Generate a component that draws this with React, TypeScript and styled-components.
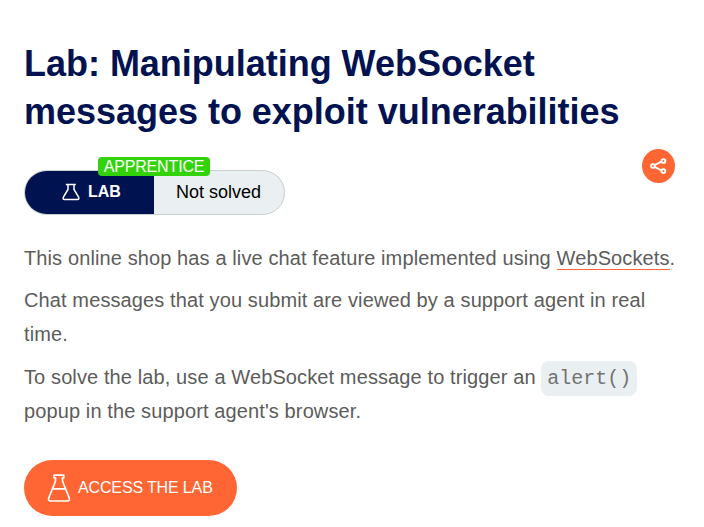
import styled, { createGlobalStyle } from 'styled-components';

const Global = createGlobalStyle`
  body { margin: 0; background: #fff; font-family: "Liberation Sans", Arial, sans-serif; }
`;

const Page = styled.main`
  box-sizing: border-box;
  width: 704px;
  height: 527px;
  overflow: hidden;
  padding: 40px 28px 0 24px;
`;

const Title = styled.h1`
  margin: 0;
  font-size: 36px;
  line-height: 48px;
  font-weight: 700;
  letter-spacing: -0.02px;
  color: #00124f;
  white-space: nowrap;
`;

const StatusRow = styled.div`
  display: flex;
  justify-content: space-between;
  align-items: flex-start;
  height: 66px;
  margin-top: 13px;
  padding-right: 1px;
`;

const StatusPill = styled.div`
  position: relative;
  display: flex;
  box-sizing: border-box;
  width: 261px;
  height: 45px;
  margin-top: 21px;
  border: 1px solid #c7cfcf;
  border-radius: 23px;
  background: #eaeff2;
`;

const LabTag = styled.div`
  display: flex;
  box-sizing: border-box;
  align-items: center;
  gap: 8px;
  width: 129px;
  padding: 0 0 2px 37px;
  border-radius: 22px 0 0 22px;
  background: #00124f;
  color: #fff;
  font-size: 16px;
  font-weight: 700;
`;

const Status = styled.div`
  padding-left: 22px;
  line-height: 42px;
  font-size: 18px;
  color: #000;
`;

const Level = styled.span`
  position: absolute;
  left: 73px;
  top: -14px;
  width: 112px;
  height: 19px;
  border-radius: 4px;
  background: #33d30b;
  color: #fff;
  font-size: 16px;
  letter-spacing: -0.15px;
  line-height: 19px;
  text-align: center;
`;

const Share = styled.button`
  display: flex;
  align-items: center;
  justify-content: center;
  width: 33px;
  height: 34px;
  padding: 0;
  border: 0;
  border-radius: 50%;
  background: #ff6633;
`;

const Text = styled.p`
  margin: 0 0 8px;
  font-size: 20px;
  line-height: 34px;
  letter-spacing: 0.113px;
  color: #5c5c5b;
  white-space: nowrap;

  &:last-child { padding-top: 1px; }
`;

const Body = styled.section`
  margin-top: 26px;
`;

const Link = styled.a`
  border-bottom: 1px solid #ff6633;
  color: inherit;
`;

const Code = styled.code`
  padding: 6px;
  border-radius: 8px;
  background: #eaeff2;
  color: #727271;
  font-family: "Liberation Mono", monospace;
  font-size: 20px;
  line-height: 1;
  letter-spacing: 0;
`;

const Access = styled.button`
  display: flex;
  align-items: center;
  gap: 7px;
  width: 213px;
  height: 56px;
  margin-top: 32px;
  padding: 0 0 0 23px;
  border: 0;
  border-radius: 28px;
  background: #ff6633;
  color: #fff;
  font-family: inherit;
  font-size: 16px;
  letter-spacing: -0.14px;
  white-space: nowrap;
`;

export default function App() {
  return (
    <Page>
      <Global />
      <Title>Lab: Manipulating WebSocket<br />messages to exploit vulnerabilities</Title>
      <StatusRow>
        <StatusPill>
          <LabTag>
            <svg width="18" height="18" viewBox="0 0 18 18" fill="none" stroke="#fff" strokeWidth="1.5">
              <path d="M3.8 1.5h10M6 1.5v5L1.4 14.2q-1 2.2 1.2 2.2h12.8q2.2 0 1.2-2.2L12 6.5v-5" />
            </svg>
            LAB
          </LabTag>
          <Status>Not solved</Status>
          <Level>APPRENTICE</Level>
        </StatusPill>
        <Share aria-label="Share">
          <svg width="17" height="18" viewBox="0 0 17 18" fill="none" stroke="#fff" strokeWidth="1.9">
            <path d="M4.8 8L11.5 4.6M4.8 10l6.7 3.4" />
            <circle cx="3" cy="9" r="1.9" />
            <circle cx="13.4" cy="4" r="1.9" />
            <circle cx="13.4" cy="14" r="1.9" />
          </svg>
        </Share>
      </StatusRow>
      <Body>
        <Text>This online shop has a live chat feature implemented using <Link>WebSockets</Link>.</Text>
        <Text>Chat messages that you submit are viewed by a support agent in real<br />time.</Text>
        <Text>To solve the lab, use a WebSocket message to trigger an <Code>alert()</Code><br />popup in the support agent's browser.</Text>
      </Body>
      <Access>
        <svg width="24" height="28" viewBox="0 0 24 28" fill="none" stroke="#fff" strokeWidth="1.7" strokeLinejoin="round" strokeLinecap="round">
          <path d="M7 1.2h9.8v2.6H15.4l.2 3.4L17 11l5.2 12.7q1.1 3.3-2 3.3H3.8Q.7 27 1.8 23.7L7 11l1.4-3.8.2-3.4H7zM6 14.8h12" />
        </svg>
        ACCESS THE LAB
      </Access>
    </Page>
  );
}
